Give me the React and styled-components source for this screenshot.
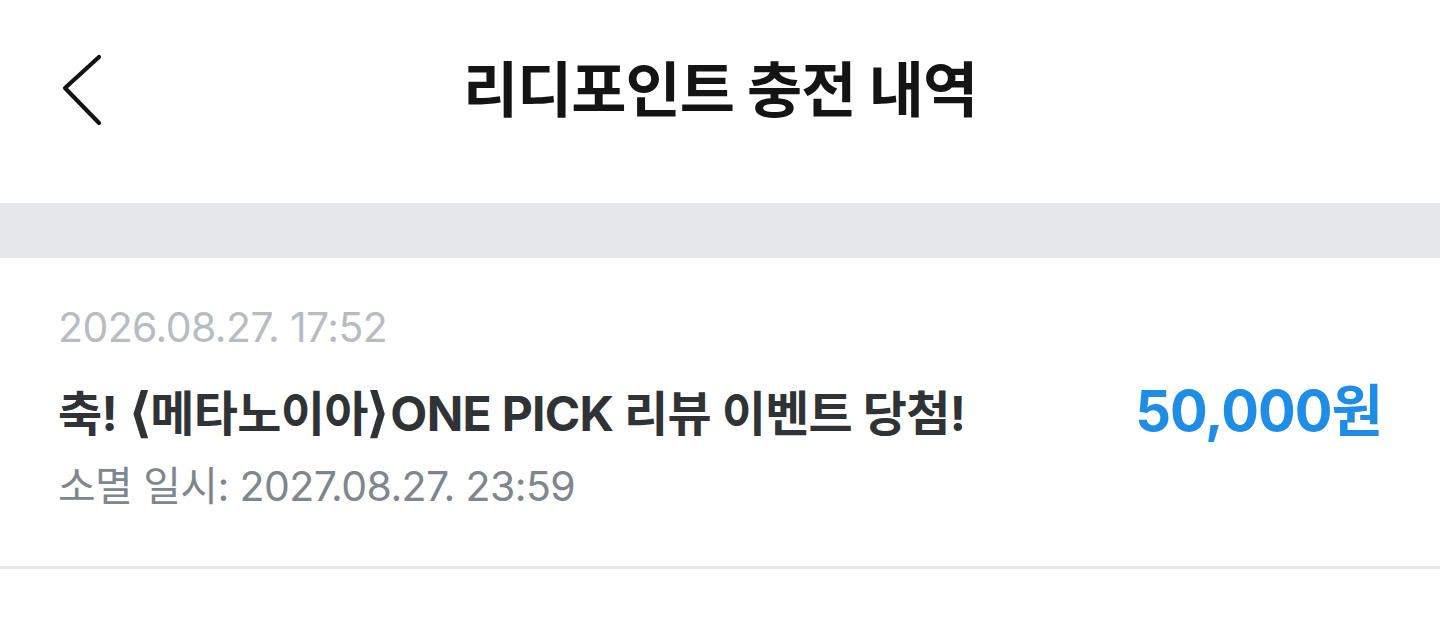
import React from "react";
import styled, { createGlobalStyle } from "styled-components";

const Global = createGlobalStyle`
  html, body { margin: 0; padding: 0; background: #ffffff; }
  body { font-family: Inter, "Noto Sans CJK KR", sans-serif; -webkit-font-smoothing: antialiased; }
`;

const Page = styled.div`
  width: 100%;
  min-height: 617px;
  background: #fff;
  display: flex;
  flex-direction: column;
`;

const Header = styled.header`
  height: 203px;
  display: grid;
  grid-template-columns: 160px 1fr 160px;
  align-items: start;
`;

const BackButton = styled.button`
  border: 0;
  background: none;
  padding: 0;
  margin: 53px 0 0 60px;
  width: 46px;
  height: 74px;
  display: flex;
  cursor: pointer;
`;

const Title = styled.h1`
  margin: 0;
  padding-top: 54px;
  text-align: center;
  font-family: Inter, "Noto Sans CJK KR", sans-serif;
  font-weight: 700;
  font-size: 60px;
  line-height: 72px;
  letter-spacing: -1px;
  color: #141414;
`;

const Band = styled.div`
  height: 55px;
  background: #e6e7eb;
`;

const Item = styled.div`
  display: flex;
  align-items: center;
  justify-content: space-between;
  padding: 0 58px;
  height: 311px;
  border-bottom: 3px solid #e6e7eb;
  box-sizing: border-box;
`;

const Info = styled.div`
  align-self: flex-start;
  padding-top: 44px;
  display: flex;
  flex-direction: column;
`;

const DateText = styled.div`
  font-size: 41px;
  line-height: 50px;
  color: ${(p) => p.$color};
  letter-spacing: -0.6px;
  margin-top: ${(p) => p.$mt || 0}px;
`;

const ItemTitle = styled.div`
  font-weight: 700;
  font-size: 48px;
  line-height: 60px;
  color: #2f3336;
  letter-spacing: -0.7px;
  margin-top: 31px;
  display: flex;
  align-items: baseline;
  white-space: pre;
`;

const Bracket = styled.span`
  font-family: "DejaVu Sans", sans-serif;
  font-weight: 700;
  font-size: 54px;
  letter-spacing: 0;
  margin: 0 ${(p) => (p.$close ? "0 0 -2px" : "-2px 0 0")};
`;

const Amount = styled.div`
  font-weight: 700;
  font-size: 56px;
  line-height: 64px;
  color: #1f8ce6;
  letter-spacing: -1px;
  margin-top: -2px;
`;

export default function App() {
  return (
    <Page>
      <Global />
      <Header>
        <BackButton aria-label="뒤로">
          <svg width="46" height="74" viewBox="0 0 46 74" fill="none">
            <path d="M39 4 L5 35 L39 70" stroke="#141414" strokeWidth="4.2" strokeLinecap="round" strokeLinejoin="round" />
          </svg>
        </BackButton>
        <Title>리디포인트 충전 내역</Title>
        <div />
      </Header>
      <Band />
      <Item>
        <Info>
          <DateText $color="#b8bcc2">2026.08.27. 17:52</DateText>
          <ItemTitle>
            {"축! "}
            <Bracket>⟨</Bracket>
            {"메타노이아"}
            <Bracket $close>⟩</Bracket>
            {"ONE PICK 리뷰 이벤트 당첨!"}
          </ItemTitle>
          <DateText $color="#80868d" $mt={17}>소멸 일시: 2027.08.27. 23:59</DateText>
        </Info>
        <Amount>50,000원</Amount>
      </Item>
    </Page>
  );
}
